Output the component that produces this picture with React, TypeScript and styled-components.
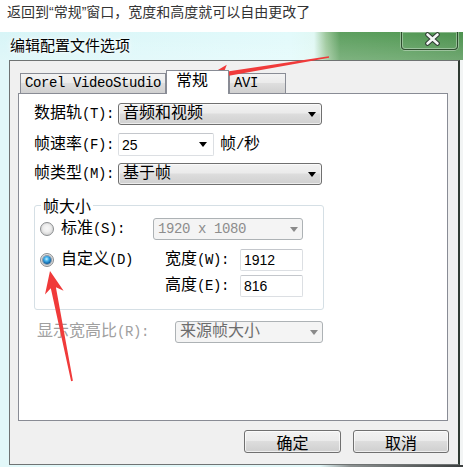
import React from 'react';
import styled, { createGlobalStyle, css } from 'styled-components';

const Global = createGlobalStyle`
  html, body { margin: 0; padding: 0; background: #fff; }
  body { width: 463px; height: 467px; overflow: hidden; }
`;

const CJK = '"Noto Sans CJK SC", sans-serif';
const FORM = '"Liberation Mono", "Noto Sans CJK SC", monospace';

const Page = styled.div`
  position: relative;
  width: 463px;
  height: 467px;
  display: flex;
  flex-direction: column;
  overflow: hidden;
`;

const Caption = styled.div`
  height: 32px;
  flex: none;
  padding-left: 7px;
  font-family: "Liberation Sans", "Noto Sans CJK SC", sans-serif;
  font-size: 14px;
  line-height: 24px;
  color: #333;
`;

const Window = styled.div`
  flex: 1;
  display: flex;
  flex-direction: column;
  min-height: 0;
`;

const TitleBar = styled.div`
  height: 28px;
  flex: none;
  display: flex;
  justify-content: space-between;
  align-items: flex-start;
  background:
    linear-gradient(rgba(255, 255, 255, 0) 0%, rgba(255, 255, 255, 0.12) 60%, rgba(255, 255, 255, 0.2) 100%),
    linear-gradient(to right, #d8f5f7 0, #e2fafb 290px, #e0f8f4 314px, #9cc79b 326px, #5d9f5f 340px, #569b58 400px, #4d924f 463px);
`;

const Title = styled.div`
  padding-left: 10px;
  font-family: ${CJK};
  font-size: 15px;
  line-height: 25px;
  color: #000;
  text-shadow: 0 0 6px #fff, 0 0 3px #fff;
`;

const CloseButton = styled.div`
  width: 57px;
  height: 18px;
  margin-right: 5px;
  box-sizing: border-box;
  border: 1px solid rgba(30, 50, 30, 0.75);
  border-top: none;
  border-radius: 0 0 4px 4px;
  box-shadow: inset 0 0 0 1px rgba(255, 255, 255, 0.35), 0 0 0 1px rgba(255, 255, 255, 0.35);
  display: flex;
  align-items: center;
  justify-content: center;
  padding: 0 0 3px 5px;
`;

const Frame = styled.div`
  flex: 1;
  display: flex;
  min-height: 0;
  padding: 0 3px 2px 9px;
  background:
    linear-gradient(to right, #e2f8f9 0, #e2f8f9 320px, #8d9292 350px, #3a3d3d 463px) left bottom / 100% 2px no-repeat,
    linear-gradient(to right, #e2f8f9 0, #e2f8f9 440px, #f2f4f4 460px);
`;

const Client = styled.div`
  flex: 1;
  display: flex;
  flex-direction: column;
  box-sizing: border-box;
  background: #f0f0f0;
  border: 1px solid #6f7373;
  border-right: 2px solid #2f3a32;
  padding: 9px 10px 0 8px;
  font-family: ${FORM};
  font-size: 16px;
  color: #000;
`;

const TabStrip = styled.div`
  display: flex;
  align-items: flex-end;
  height: 23px;
  padding-left: 2px;
`;

const Tab = styled.div<{ $w: number; $pad: number; $active?: boolean }>`
  width: ${(p) => p.$w}px;
  box-sizing: border-box;
  padding-left: ${(p) => p.$pad}px;
  border: 1px solid #898c95;
  border-bottom: none;
  white-space: nowrap;
  ${(p) =>
    p.$active
      ? css`
          height: 24px;
          line-height: 22px;
          margin-bottom: -1px;
          background: #fff;
          position: relative;
          z-index: 1;
        `
      : css`
          height: 20px;
          line-height: 19px;
          background: linear-gradient(#f3f3f3 0%, #ebebeb 45%, #dedede 50%, #d0d0d0 100%);
        `}
`;

const Panel = styled.div`
  flex: 0 0 328px;
  box-sizing: border-box;
  background: #fff;
  border: 1px solid #898c95;
  padding: 9px 0 0 15px;
  display: flex;
  flex-direction: column;
`;

const FormRow = styled.div<{ $h: number; $mt?: number }>`
  display: flex;
  align-items: center;
  height: ${(p) => p.$h}px;
  margin-top: ${(p) => p.$mt ?? 0}px;
`;

const Label = styled.div<{ $w?: number; $disabled?: boolean; $pl?: number }>`
  width: ${(p) => p.$w ?? 84}px;
  flex: none;
  box-sizing: border-box;
  padding-left: ${(p) => p.$pl ?? 0}px;
  line-height: 20px;
  white-space: nowrap;
  color: ${(p) => (p.$disabled ? '#a0a0a0' : '#000')};
`;

const Half = styled.span`
  font-family: "Liberation Mono", monospace;
  font-size: 14px;
  letter-spacing: -0.4px;
`;

const SelectBox = styled.div<{ $w: number; $disabled?: boolean; $tone?: string }>`
  width: ${(p) => p.$w}px;
  height: 22px;
  flex: none;
  box-sizing: border-box;
  display: flex;
  align-items: center;
  justify-content: space-between;
  padding: 0 5px 0 4px;
  border-radius: 3px;
  line-height: 20px;
  white-space: nowrap;
  ${(p) =>
    p.$disabled
      ? css`
          border: 1px solid #adb2b5;
          background: #f4f4f4;
          color: ${p.$tone ?? '#7a7a7a'};
          padding-right: 4px;
        `
      : css`
          border: 1px solid #707070;
          background: linear-gradient(#f2f2f2 0%, #ebebeb 45%, #dddddd 50%, #d0d0d0 100%);
          color: #000;
          box-shadow: inset 0 0 0 1px rgba(255, 255, 255, 0.6);
        `}
`;

const Caret = styled.span<{ $disabled?: boolean }>`
  width: 0;
  height: 0;
  flex: none;
  border-left: 4px solid transparent;
  border-right: 4px solid transparent;
  border-top: 5px solid ${(p) => (p.$disabled ? '#8a8a8a' : '#000')};
`;

const EditBox = styled.div<{ $w: number; $h?: number }>`
  width: ${(p) => p.$w}px;
  height: ${(p) => p.$h ?? 22}px;
  flex: none;
  box-sizing: border-box;
  border: 1px solid #dcdfe3;
  border-top-color: #c4c7cc;
  border-radius: 2px;
  background: #fff;
  display: flex;
  align-items: center;
  justify-content: space-between;
  padding: 0 6px 0 3px;
  font-family: "Liberation Sans", sans-serif;
  font-size: 14px;
  color: #000;
`;

const Unit = styled.div`
  margin-left: 6px;
  line-height: 20px;
  white-space: nowrap;
`;

const Group = styled.fieldset`
  margin: 10px 0 0 0;
  width: 290px;
  box-sizing: border-box;
  border: 1px solid #d5dfe5;
  border-radius: 3px;
  padding: 3px 0 12px 5px;
  min-inline-size: 0;
`;

const Legend = styled.legend`
  padding: 0 2px;
  margin-left: 1px;
  line-height: 20px;
  font-family: ${CJK};
  font-size: 16px;
`;

const GroupGrid = styled.div`
  display: grid;
  grid-template-columns: 113px 12px 75px 63px;
  grid-template-rows: 22px 31px 26px;
`;

const Cell = styled.div<{ $col: string; $row: number; $end?: boolean }>`
  grid-column: ${(p) => p.$col};
  grid-row: ${(p) => p.$row};
  align-self: ${(p) => (p.$end ? 'end' : 'center')};
  display: flex;
  align-items: center;
  line-height: 22px;
  white-space: nowrap;
`;

const RadioCircle = styled.span<{ $checked?: boolean }>`
  width: 14px;
  height: 14px;
  flex: none;
  box-sizing: border-box;
  margin-right: 7px;
  border-radius: 50%;
  border: 1px solid #8b8e90;
  background: radial-gradient(circle at 50% 45%, #f7f7f7 0, #eeeeee 40%, #d2d2d2 75%, #e9e9e9 100%);
  display: flex;
  align-items: center;
  justify-content: center;
`;

const RadioDot = styled.span`
  width: 8px;
  height: 8px;
  border-radius: 50%;
  background: radial-gradient(circle at 45% 38%, #c9f1ff 0, #46b4ee 30%, #0d5fa0 70%, #073561 100%);
  box-shadow: 0 0 0 1px rgba(10, 50, 90, 0.45);
`;

const ButtonRow = styled.div`
  display: flex;
  justify-content: flex-end;
  gap: 12px;
  margin-top: 9px;
  margin-right: -1px;
`;

const Button = styled.div<{ $w: number }>`
  width: ${(p) => p.$w}px;
  height: 23px;
  box-sizing: border-box;
  border: 1px solid #707070;
  border-radius: 3px;
  background: linear-gradient(#f2f2f2 0%, #ebebeb 45%, #dddddd 50%, #cfcfcf 100%);
  box-shadow: inset 0 0 0 1px rgba(255, 255, 255, 0.65);
  display: flex;
  align-items: center;
  justify-content: center;
  font-family: ${CJK};
  font-size: 16px;
  color: #000;
`;

const Overlay = styled.svg`
  position: absolute;
  left: 0;
  top: 0;
  pointer-events: none;
`;

const Txt = ({ s }: { s: string }) => (
  <>
    {s
      .split(/([\x20-\x7e]+)/)
      .filter(Boolean)
      .map((p, i) =>
        /^[\x20-\x7e]+$/.test(p) ? <Half key={i}>{p}</Half> : <React.Fragment key={i}>{p}</React.Fragment>
      )}
  </>
);

const Radio = ({ checked, label }: { checked?: boolean; label: string }) => (
  <>
    <RadioCircle $checked={checked}>{checked && <RadioDot />}</RadioCircle>
    <Txt s={label} />
  </>
);

const CloseGlyph = () => (
  <svg width="17" height="14" viewBox="0 0 17 14">
    <path d="M3.5 2.5 L13.5 11.5 M13.5 2.5 L3.5 11.5" stroke="#2f3b33" strokeWidth="4.6" strokeLinecap="round" fill="none" />
    <path d="M3.5 2.5 L13.5 11.5 M13.5 2.5 L3.5 11.5" stroke="#f4f6f6" strokeWidth="2.6" strokeLinecap="round" fill="none" />
  </svg>
);

export default function App() {
  return (
    <Page>
      <Global />
      <Caption>返回到“常规”窗口，宽度和高度就可以自由更改了</Caption>
      <Window>
        <TitleBar>
          <Title>编辑配置文件选项</Title>
          <CloseButton>
            <CloseGlyph />
          </CloseButton>
        </TitleBar>
        <Frame>
          <Client>
            <TabStrip>
              <Tab $w={146} $pad={4}>
                <Txt s="Corel VideoStudio" />
              </Tab>
              <Tab $w={63} $pad={9} $active>
                常规
              </Tab>
              <Tab $w={57} $pad={4}>
                <Txt s="AVI" />
              </Tab>
            </TabStrip>
            <Panel>
              <FormRow $h={22}>
                <Label>
                  <Txt s="数据轨(T):" />
                </Label>
                <SelectBox $w={204}>
                  音频和视频
                  <Caret />
                </SelectBox>
              </FormRow>
              <FormRow $h={23} $mt={8}>
                <Label>
                  <Txt s="帧速率(F):" />
                </Label>
                <EditBox $w={96} $h={23}>
                  25
                  <Caret />
                </EditBox>
                <Unit>
                  <Txt s="帧/秒" />
                </Unit>
              </FormRow>
              <FormRow $h={22} $mt={7}>
                <Label>
                  <Txt s="帧类型(M):" />
                </Label>
                <SelectBox $w={204}>
                  基于帧
                  <Caret />
                </SelectBox>
              </FormRow>
              <Group>
                <Legend>帧大小</Legend>
                <GroupGrid>
                  <Cell $col="1" $row={1}>
                    <Radio label="标准(S):" />
                  </Cell>
                  <Cell $col="2 / 5" $row={1}>
                    <SelectBox $w={150} $disabled $tone="#8d8d8d">
                      <Txt s="1920 x 1080" />
                      <Caret $disabled />
                    </SelectBox>
                  </Cell>
                  <Cell $col="1" $row={2} $end>
                    <Radio checked label="自定义(D)" />
                  </Cell>
                  <Cell $col="3" $row={2} $end>
                    <Txt s="宽度(W):" />
                  </Cell>
                  <Cell $col="4" $row={2} $end>
                    <EditBox $w={63}>1912</EditBox>
                  </Cell>
                  <Cell $col="3" $row={3} $end>
                    <Txt s="高度(E):" />
                  </Cell>
                  <Cell $col="4" $row={3} $end>
                    <EditBox $w={63}>816</EditBox>
                  </Cell>
                </GroupGrid>
              </Group>
              <FormRow $h={22} $mt={11}>
                <Label $w={141} $pl={3} $disabled>
                  <Txt s="显示宽高比(R):" />
                </Label>
                <SelectBox $w={148} $disabled $tone="#6d6d6d">
                  来源帧大小
                  <Caret $disabled />
                </SelectBox>
              </FormRow>
            </Panel>
            <ButtonRow>
              <Button $w={97}>确定</Button>
              <Button $w={96}>取消</Button>
            </ButtonRow>
          </Client>
        </Frame>
      </Window>
      <Overlay width="463" height="467" viewBox="0 0 463 467">
        <polygon
          points="206,77 229.5,81.6 224.8,76.6 329.1,57.8 328.9,56.2 224.0,72.0 226.8,64.8"
          fill="#f03a3a"
        />
        <polygon
          points="50,271 63.6,290.7 55.9,287.2 72.9,380.8 71.1,381.2 50.8,288.2 45.0,294.5"
          fill="#f03a3a"
        />
      </Overlay>
    </Page>
  );
}
